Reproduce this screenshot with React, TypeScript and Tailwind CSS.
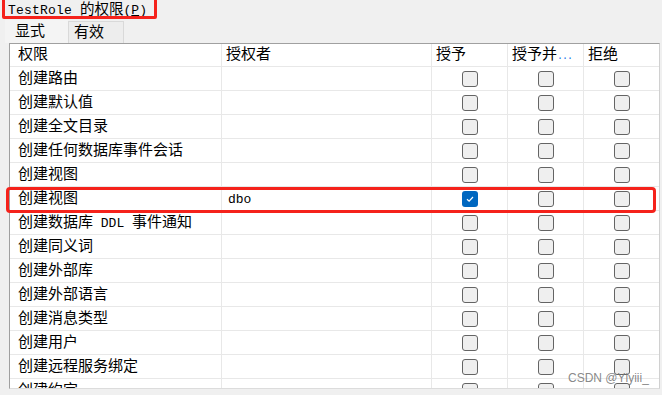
import React from "react";

type Row = { name: string; grantor?: string; grant?: boolean };

const rows: Row[] = [
  { name: "创建路由" },
  { name: "创建默认值" },
  { name: "创建全文目录" },
  { name: "创建任何数据库事件会话" },
  { name: "创建视图" },
  { name: "创建视图", grantor: "dbo", grant: true },
  { name: "创建数据库 DDL 事件通知" },
  { name: "创建同义词" },
  { name: "创建外部库" },
  { name: "创建外部语言" },
  { name: "创建消息类型" },
  { name: "创建用户" },
  { name: "创建远程服务绑定" },
  { name: "创建约定" },
];

// latin runs are narrower in the original dialog font, so size them apart
const Mixed = ({ text }: { text: string }) => {
  const parts = text.split(/([\x20-\x7e]+)/).filter((p) => p !== "");
  return (
    <>
      {parts.map((p, i) =>
        /^[\x20-\x7e]+$/.test(p) ? (
          <span key={i} className="text-[13px] whitespace-pre">
            {p}
          </span>
        ) : (
          <span key={i}>{p}</span>
        )
      )}
    </>
  );
};

const Check = ({ checked }: { checked?: boolean }) =>
  checked ? (
    <div className="w-4 h-4 rounded-[3px] bg-[#0067c0] flex items-center justify-center">
      <svg width="10" height="10" viewBox="0 0 10 10">
        <path d="M2 5.2 L4.1 7.2 L8 3" fill="none" stroke="#fff" strokeWidth="1.2" />
      </svg>
    </div>
  ) : (
    <div className="w-4 h-4 rounded-[3px] border-[1.5px] border-[#646464] bg-[#efefef]" />
  );

const cols = "grid grid-cols-[212px_210px_76px_76px_76px]";
const cell = "border-r border-b border-[#e8e8e8] flex items-center";

export default function App() {
  return (
    <div
      className="relative w-[662px] h-[395px] overflow-hidden bg-[#f0f0f0] text-black text-[15px] leading-none"
      style={{ fontFamily: '"Liberation Mono", "Noto Sans CJK SC", monospace' }}
    >
      <div className="h-[19px] pl-[8px] pt-[1px] flex items-center">
        <span className="text-[13px] tracking-[0.2px] whitespace-pre">TestRole </span>
        <span className="text-[14.5px]">的权限</span>
        <span className="text-[13px]">
          (<span className="underline">P</span>)
        </span>
      </div>

      <div className="h-[24px] flex items-end pl-[5px]">
        <div className="h-[23px] w-[63px] flex items-center pl-[10px] pt-[1px] bg-[#f4f4f4]">显式</div>
        <div className="h-[22px] w-[56px] flex items-center pl-[5px] pt-[2px] border border-b-0 border-[#d9d9d9] bg-[#ededed]">
          有效
        </div>
      </div>

      <div className="ml-[9px] w-[651px] h-[346px] overflow-hidden border-l border-t border-r border-b border-l-[#a0a0a0] border-t-[#a0a0a0] border-r-[#d0d0d0] border-b-[#dcdcdc] bg-white">
        <div className={`${cols} h-[23px]`}>
          <div className={`${cell} pl-[8px] pt-[1px]`}>权限</div>
          <div className={`${cell} pl-[4px] pt-[1px]`}>授权者</div>
          <div className={`${cell} pl-[4px] pt-[1px]`}>授予</div>
          <div className={`${cell} pl-[4px] pt-[1px]`}>
            授予并
            <span className="text-[10px] text-[#1a73e8] self-end mb-[4px] tracking-[-1px]">...</span>
          </div>
          <div className={`${cell} pl-[4px] pt-[1px]`}>拒绝</div>
        </div>
        {rows.map((r, i) => (
          <div key={i} className={`${cols} h-[24px]`}>
            <div className={`${cell} pl-[8px] pt-[2px]`}>
              <Mixed text={r.name} />
            </div>
            <div className={`${cell} pl-[6px] pt-[2px]`}>
              {r.grantor && <span className="text-[13px]">{r.grantor}</span>}
            </div>
            <div className={`${cell} justify-center`}>
              <Check checked={r.grant} />
            </div>
            <div className={`${cell} justify-center`}>
              <Check />
            </div>
            <div className={`${cell} justify-center`}>
              <Check />
            </div>
          </div>
        ))}
      </div>

      {/* annotations */}
      <div className="absolute left-[2px] top-[-3px] w-[155px] h-[22px] border-[3px] border-[#f5221b] rounded-[2px]" />
      <div className="absolute left-[6px] top-[187px] w-[650px] h-[26px] border-[3.5px] border-[#f5221b] rounded-[4px]" />
      <div
        className="absolute left-[568px] top-[372px] text-[12px] text-[#7a7a7a]/90"
        style={{ fontFamily: '"Liberation Sans", Arial, sans-serif' }}
      >
        CSDN @Ylyiii_
      </div>
    </div>
  );
}
